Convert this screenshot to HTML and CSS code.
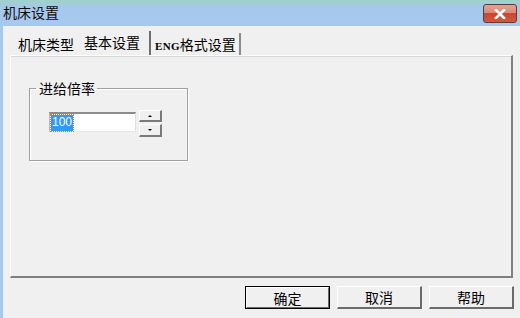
FILE: index.html
```html
<!DOCTYPE html>
<html lang="zh-CN">
<head>
    <meta charset="UTF-8">
    <title>机床设置</title>
    <link rel="stylesheet" href="styles.css">
</head>
<body>
    <div class="window">
        <div class="titlebar">
            <span class="title">机床设置</span>
            <button class="close" aria-label="关闭">
                <svg width="12" height="10" viewBox="0 0 12 10">
                    <path d="M2 1 L10 9 M10 1 L2 9" stroke="#fff" stroke-width="2.6" stroke-linecap="square"/>
                </svg>
            </button>
        </div>

        <div class="content">
            <div class="tabs">
                <div class="tab">机床类型</div>
                <div class="tab active">基本设置</div>
                <div class="tab last"><span class="eng">ENG</span>格式设置</div>
            </div>

            <div class="panel">
                <fieldset class="group">
                    <legend>进给倍率</legend>
                    <div class="spin-row">
                        <div class="field"><span class="sel">100</span></div>
                        <div class="spinner">
                            <div class="spin-btn"><span class="arrow up"></span></div>
                            <div class="spin-btn low"><span class="arrow down"></span></div>
                        </div>
                    </div>
                </fieldset>
            </div>

            <div class="footer">
                <button class="btn default">确定</button>
                <button class="btn">取消</button>
                <button class="btn">帮助</button>
            </div>
        </div>
    </div>
</body>
</html>
```

FILE: styles.css
```css
body {
    margin: 0;
    padding: 0;
    background: #f0f0f0;
    font-family: "Noto Sans CJK SC", "Liberation Sans", sans-serif;
    font-size: 14px;
    color: #000;
}

.window {
    width: 520px;
    height: 318px;
    display: flex;
    flex-direction: column;
    overflow: hidden;
}

.titlebar {
    height: 26px;
    flex: none;
    display: flex;
    align-items: center;
    justify-content: space-between;
    padding: 0 3px 0 3px;
    background: linear-gradient(to bottom, #9ed2c6 0px, #a2ccdc 4px, #a6c8ec 8px, #a8c9ee 26px);
}

.title {
    font-size: 14px;
    color: #0c0c0c;
    line-height: 16px;
    margin-top: -2px;
}

.close {
    width: 34px;
    height: 19px;
    margin-top: 1px;
    padding: 0;
    border: 1px solid #5d3a3a;
    border-radius: 3px;
    background: linear-gradient(to bottom, #e6a090 0%, #d98a78 45%, #c8462e 50%, #d8583c 100%);
    display: flex;
    align-items: center;
    justify-content: center;
}

.content {
    flex: 1;
    display: flex;
    flex-direction: column;
    border-left: 3px solid #a9c9ec;
    padding: 7px 7px 0 7px;
}

.tabs {
    display: flex;
    height: 22px;
}

.tab {
    padding: 3px 8px 0 8px;
    line-height: 16px;
}

.tab.active {
    margin-top: -2px;
    padding: 3px 9px 0 2px;
    border-right: 2px solid #6f6f6f;
}

.tab.last {
    padding: 3px 3px 0 4px;
    border-right: 2px solid #8a8a8a;
}

.eng {
    font-family: "Liberation Serif", serif;
    font-weight: bold;
    font-size: 11px;
    letter-spacing: 0.3px;
}

.panel {
    height: 223px;
    border-top: 1px solid #ffffff;
    border-left: 1px solid #ffffff;
    border-right: 2px solid #808080;
    border-bottom: 2px solid #808080;
    box-shadow: inset 0 1px 0 #d8d8d8;
    padding: 24px 0 0 18px;
    box-sizing: border-box;
}

.group {
    width: 159px;
    height: 81px;
    box-sizing: border-box;
    margin: 0;
    padding: 0 0 0 19px;
    border: 1px solid #a0a0a0;
    box-shadow: 1px 1px 0 #fff, inset 1px 1px 0 #fff;
}

.group legend {
    padding: 0 2px 0 3px;
    margin-left: -13px;
    line-height: 16px;
}

.spin-row {
    display: flex;
    align-items: flex-start;
    margin-top: 16px;
}

.field {
    width: 87px;
    height: 20px;
    background: #fff;
    border-top: 2px solid #8c8c8c;
    border-left: 1px solid #b8b8b8;
    border-right: 1px solid #e0e0e0;
    border-bottom: 1px solid #e8e8e8;
    padding: 1px 0 0 1px;
    box-sizing: border-box;
    display: flex;
}

.sel {
    background: #3399ff;
    color: #fff;
    font-family: "Liberation Sans", sans-serif;
    font-size: 12px;
    line-height: 15px;
    padding: 0 1px;
    width: 20px;
    outline: 1px dotted #c08040;
}

.spinner {
    margin-left: 3px;
    margin-top: -2px;
    display: flex;
    flex-direction: column;
    gap: 2px;
}

.spin-btn {
    width: 23px;
    height: 12px;
    box-sizing: border-box;
    background: #f0f0f0;
    border-top: 1px solid #fff;
    border-left: 1px solid #fff;
    border-right: 2px solid #7a7a7a;
    border-bottom: 2px solid #7a7a7a;
    display: flex;
    align-items: center;
    justify-content: center;
}

.spin-btn.low {
    height: 13px;
}

.arrow {
    width: 0;
    height: 0;
    border-left: 2px solid transparent;
    border-right: 2px solid transparent;
}

.arrow.up {
    border-bottom: 2px solid #000;
}

.arrow.down {
    border-top: 2px solid #000;
}

.footer {
    display: flex;
    justify-content: flex-end;
    gap: 7px;
    padding-top: 8px;
    margin-right: -1px;
}

.btn {
    width: 85px;
    height: 23px;
    padding: 0;
    box-sizing: border-box;
    font-family: "Noto Sans CJK SC", sans-serif;
    font-size: 14px;
    line-height: 16px;
    background: #f0f0f0;
    border-top: 1px solid #fff;
    border-left: 1px solid #fff;
    border-right: 2px solid #6a6a6a;
    border-bottom: 2px solid #6a6a6a;
    color: #000;
}

.btn.default {
    outline: 1px solid #000;
    outline-offset: -1px;
    border-top: 2px solid #fff;
    border-left: 2px solid #fff;
}
```
